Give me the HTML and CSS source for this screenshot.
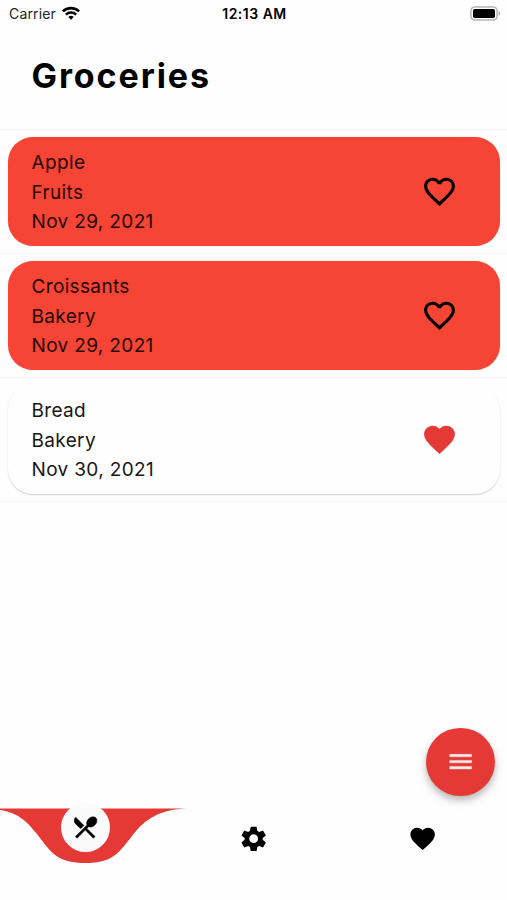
FILE: index.html
```html
<!DOCTYPE html>
<html lang="en">
<head>
<meta charset="utf-8">
<title>Groceries</title>
<link rel="stylesheet" href="styles.css">
</head>
<body>
<svg width="0" height="0" class="defs" aria-hidden="true">
  <symbol id="heart" viewBox="0 0 24 24"><path d="M12 21.35l-1.45-1.32C5.4 15.36 2 12.28 2 8.5 2 5.42 4.42 3 7.5 3c1.74 0 3.41.81 4.5 2.09C13.09 3.81 14.76 3 16.5 3 19.58 3 22 5.42 22 8.5c0 3.78-3.4 6.86-8.55 11.54L12 21.35z"/></symbol>
  <symbol id="heart-outline" viewBox="0 0 24 24"><path d="M16.5 3c-1.74 0-3.41.81-4.5 2.09C10.91 3.81 9.24 3 7.5 3 4.42 3 2 5.42 2 8.5c0 3.78 3.4 6.86 8.55 11.54L12 21.35l1.45-1.32C18.6 15.36 22 12.28 22 8.5 22 5.42 19.58 3 16.5 3zm-4.4 15.55l-.1.1-.1-.1C7.14 14.24 4 11.39 4 8.5 4 6.5 5.5 5 7.5 5c1.54 0 3.04.99 3.57 2.36h1.87C13.46 5.99 14.96 5 16.5 5c2 0 3.5 1.5 3.5 3.5 0 2.89-3.14 5.74-7.9 10.05z"/></symbol>
</svg>
<div class="screen">
  <header class="status">
    <div class="carrier"><span>Carrier</span>
      <svg class="wifi" viewBox="0 0 18 14" fill="none" stroke="#000" stroke-width="2.6"><path d="M.9 5.4a11.6 11.6 0 0 1 16.2 0M3.9 8.6a7.3 7.3 0 0 1 10.2 0"/><path d="M9 13.8L6.3 11a3.9 3.9 0 0 1 5.4 0z" fill="#000" stroke="none"/></svg>
    </div>
    <time class="clock">12:13 AM</time>
    <svg class="battery" viewBox="0 0 31 15"><rect x=".9" y=".9" width="26.2" height="13.2" rx="4" fill="#fff" stroke="#b5b5b5" stroke-width="1.5"/><rect x="3" y="3" width="22" height="9" rx="1.8"/><path d="M28.6 5.2c2 .7 2 4 0 4.7z" fill="#aaa"/></svg>
  </header>
  <h1>Groceries</h1>
  <main class="list">
    <div class="row"><article class="card red"><div class="info"><div>Apple</div><div>Fruits</div><div>Nov 29, 2021</div></div><svg class="fav"><use href="#heart-outline"/></svg></article></div>
    <div class="row"><article class="card red"><div class="info"><div>Croissants</div><div>Bakery</div><div>Nov 29, 2021</div></div><svg class="fav"><use href="#heart-outline"/></svg></article></div>
    <div class="row"><article class="card"><div class="info"><div>Bread</div><div>Bakery</div><div>Nov 30, 2021</div></div><svg class="fav active"><use href="#heart"/></svg></article></div>
  </main>
  <div class="actions">
    <button class="fab" aria-label="Menu"><svg class="icon" viewBox="0 0 24 24"><path d="M3 18h18v-2H3v2zm0-5h18v-2H3v2zm0-7v2h18V6H3z"/></svg></button>
  </div>
  <nav class="tabs">
    <svg class="wave" viewBox="0 0 190 56"><path d="M-16 .5H187C160 1.5 146 10 132 28C118 46 112 55 85.3 55S52 46 38.500 28C26 12 18 5 0 2z"/></svg>
    <div class="tab"><span class="bubble"><svg class="icon utensils" viewBox="0 0 24 24"><path d="M8.1 13.34l2.83-2.83L3.91 3.5c-1.56 1.56-1.56 4.09 0 5.66l4.19 4.18zm6.78-1.81c1.53.71 3.68.21 5.27-1.38 1.91-1.91 2.28-4.65.81-6.12-1.46-1.46-4.2-1.1-6.12.81-1.59 1.59-2.09 3.74-1.38 5.27L3.7 19.87l1.41 1.41L12 14.41l6.88 6.88 1.41-1.41L13.41 13l1.47-1.47z"/></svg></span></div>
    <div class="tab"><svg class="icon" viewBox="0 0 24 24"><path fill-rule="evenodd" d="M9.600 2.300h4.800l.6 3.300 1.500.9 3.200-1.200 2.300 4.100-2.600 2.100v1.500l2.600 2.100-2.300 4.100-3.200-1.200-1.500.9-.6 3.300H9.600L9 18.900 7.500 18l-3.200 1.200L2 15.100 4.600 13v-1.500L2 9.400l2.300-4.100 3.200 1.200L9 5.600zM12 8.400a3.600 3.600 0 1 0 0 7.200 3.600 3.600 0 0 0 0-7.200z"/></svg></div>
    <div class="tab"><svg class="icon"><use href="#heart"/></svg></div>
  </nav>
</div>
</body>
</html>
```
FILE: styles.css
```css
* { box-sizing: border-box; }
body { margin: 0; background: #fefefe; color: #000; font-family: Inter, "Liberation Sans", sans-serif; }
.defs { position: absolute; }
.screen { height: 900px; display: flex; flex-direction: column; overflow: hidden; }
.status { height: 26px; padding: 0 6px 0 9px; display: grid; grid-template-columns: 1fr auto 1fr; align-items: center; font-size: 14px; }
.carrier { display: flex; align-items: center; gap: 6px; color: #222; letter-spacing: .15px; }
.wifi { width: 18px; height: 14px; }
.clock { font-weight: 600; font-size: 14px; letter-spacing: .5px; margin-left: -1px; }
.battery { width: 31px; height: 15px; justify-self: end; }
h1 { margin: 0; height: 102.600px; padding: 29px 31.500px 0; font-size: 34px; line-height: 41px; font-weight: 650; letter-spacing: 1.900px; }
.list { display: flex; flex-direction: column; border-top: 1px solid #f5f5f5; }
.row { height: 124.100px; padding: 7.100px 7.500px 7px 8px; border-bottom: 1px solid #f5f5f5; }
.card { height: 109px; padding: 0 41.700px 0 23.500px; border-radius: 25px; display: flex; align-items: center; justify-content: space-between; background: #fefefe; box-shadow: 0 1px 1.500px rgba(0,0,0,.19); }
.card.red { background: #f64435; box-shadow: 0 0 1px rgba(180,50,40,.4); }
.info { font-size: 19px; line-height: 29.300px; letter-spacing: .35px; color: #161616; padding-top: 2px; }
.red .info { color: #250604; }
.fav { width: 37px; height: 37px; }
.fav.active { fill: #e53935; }
.actions { flex: 1; display: flex; justify-content: flex-end; align-items: flex-end; padding: 0 12.500px 12px 0; }
.fab { width: 68.500px; height: 68.500px; padding: 0; border: 0; border-radius: 50%; background: #e53935; display: grid; place-items: center; box-shadow: 0 4px 6px rgba(0,0,0,.2), 0 5px 12px rgba(0,0,0,.1); }
.fab .icon { fill: #fff; fill-opacity: .9; stroke: #fff; stroke-opacity: .9; stroke-width: .3px; }
.icon { width: 29.300px; height: 29.300px; display: block; }
.utensils { width: 28.500px; height: 28.500px; stroke: #000; stroke-width: .4px; }
.tabs { position: relative; height: 92px; display: grid; grid-template-columns: repeat(3, 1fr); }
.wave { position: absolute; left: 0; top: 0; width: 190px; height: 56px; fill: #e53935; }
.tab { position: relative; display: flex; justify-content: center; padding-top: 16px; }
.tab:has(.bubble) { padding-top: 0; }
.bubble { width: 49px; height: 49px; margin: -5.500px 0 0 1px; border-radius: 50%; background: #fafafa; display: grid; place-items: center; }
```
